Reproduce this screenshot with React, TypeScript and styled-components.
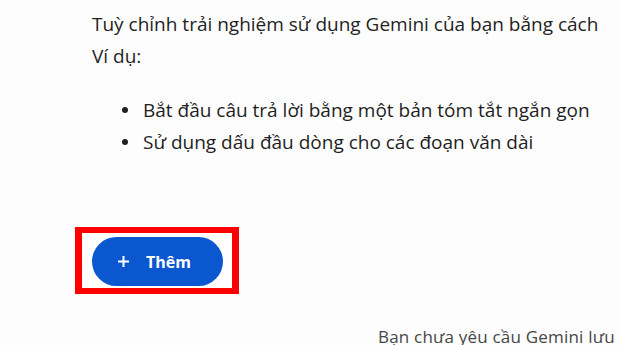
import React from "react";
import styled, { createGlobalStyle } from "styled-components";

const Global = createGlobalStyle`
  html, body {
    margin: 0;
    padding: 0;
    background: #fdfdfd;
    overflow: hidden;
  }
  body {
    width: 622px;
    height: 345px;
    font-family: "Open Sans", Roboto, sans-serif;
    color: #1f1f1f;
  }
`;

const Page = styled.main`
  display: flex;
  flex-direction: column;
  align-items: flex-start;
  padding: 8px 0 0 92px;
  white-space: nowrap;
`;

const Intro = styled.p`
  margin: 0;
  font-size: 19px;
  line-height: 32px;
`;

const Examples = styled.ul`
  margin: 22px 0 0;
  padding: 0 0 0 30px;
  list-style: none;
  font-size: 19px;
  line-height: 32px;
`;

const Item = styled.li`
  display: flex;
  align-items: center;
  gap: 15px;

  &::before {
    content: "";
    flex: none;
    width: 6px;
    height: 6px;
    border-radius: 50%;
    background: #1f1f1f;
  }
`;

const Highlight = styled.div`
  margin: 69px 0 0 -17px;
  border-style: solid;
  border-color: #ff0000;
  border-width: 6px 7px;
  padding: 4px 9px 2px 10px;
  background: #ffffff;
`;

const AddButton = styled.button`
  display: flex;
  align-items: center;
  gap: 17px;
  height: 49px;
  width: 131px;
  padding: 0 0 0 26px;
  border: none;
  border-radius: 25px;
  background: #0b57d0;
  color: #ffffff;
  font-family: "Open Sans", Roboto, sans-serif;
  font-size: 16px;
  font-weight: 700;
  cursor: pointer;
`;

const Plus = styled.svg`
  width: 11px;
  height: 11px;
  flex: none;
`;

const Footnote = styled.p`
  margin: 31px 0 0 286px;
  font-size: 17px;
  letter-spacing: 0.2px;
  line-height: 24px;
  color: #444746;
`;

export default function App() {
  return (
    <>
      <Global />
      <Page>
        <Intro>
          Tuỳ chỉnh trải nghiệm sử dụng Gemini của bạn bằng cách
          <br />
          Ví dụ:
        </Intro>
        <Examples>
          <Item>Bắt đầu câu trả lời bằng một bản tóm tắt ngắn gọn</Item>
          <Item>Sử dụng dấu đầu dòng cho các đoạn văn dài</Item>
        </Examples>
        <Highlight>
          <AddButton>
            <Plus viewBox="0 0 11 11" aria-hidden="true">
              <path d="M5.5 0v11M0 5.5h11" stroke="#ffffff" strokeWidth="2" />
            </Plus>
            Thêm
          </AddButton>
        </Highlight>
        <Footnote>Bạn chưa yêu cầu Gemini lưu</Footnote>
      </Page>
    </>
  );
}
